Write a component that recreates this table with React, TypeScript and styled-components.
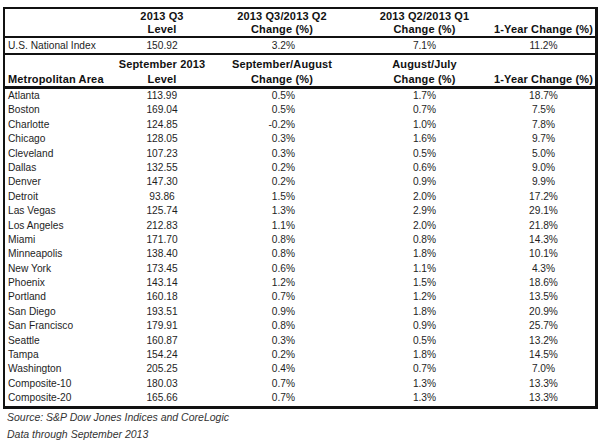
import React from "react";
import styled, { createGlobalStyle } from "styled-components";

const Global = createGlobalStyle`
  html, body { margin: 0; padding: 0; background: #fff; }
  body { font-family: "Liberation Sans", Arial, sans-serif; color: #1e1e1e; }
`;

const COLS = "112px 90px 150px 135px 1fr";

const Page = styled.div`
  padding: 7px 0 0 3px;
  width: 600px;
  box-sizing: border-box;
`;

const Frame = styled.div`
  width: 595px;
  box-sizing: border-box;
  border-style: solid;
  border-color: #111;
  border-width: 2px 3px 3px 2px;
`;

const HeadRow = styled.div<{ $h: number; $rule: number; $pt: number; $lh: number }>`
  display: grid;
  grid-template-columns: ${COLS};
  height: ${(p) => p.$h}px;
  box-sizing: content-box;
  border-bottom: ${(p) => p.$rule}px solid #111;
  padding-top: ${(p) => p.$pt}px;
  font-size: 11px;
  font-weight: bold;
  letter-spacing: 0.15px;
  line-height: ${(p) => p.$lh}px;
  color: #111;
`;

const HeadCell = styled.div<{ $align?: string }>`
  display: flex;
  flex-direction: column;
  justify-content: flex-end;
  align-items: ${(p) => p.$align || "center"};
  padding-left: ${(p) => (p.$align === "flex-start" ? "3px" : "0")};
  white-space: nowrap;
`;

const Row = styled.div<{ $h: number; $rule?: number }>`
  display: grid;
  grid-template-columns: ${COLS};
  height: ${(p) => p.$h}px;
  border-bottom: ${(p) => p.$rule || 0}px solid #111;
  font-size: 10.2px;
  line-height: ${(p) => p.$h}px;
  white-space: nowrap;
`;

const Name = styled.div`
  padding-left: 3px;
`;

const Num = styled.div<{ $right?: number }>`
  text-align: ${(p) => (p.$right != null ? "right" : "center")};
  padding-right: ${(p) => p.$right || 0}px;
`;

const Caption = styled.div`
  padding: 0 0 0 4px;
  font-size: 10.5px;
  font-style: italic;
  line-height: 17px;
  color: #333;
`;

const data: [string, string, string, string, string][] = [
  ["Atlanta", "113.99", "0.5%", "1.7%", "18.7%"],
  ["Boston", "169.04", "0.5%", "0.7%", "7.5%"],
  ["Charlotte", "124.85", "-0.2%", "1.0%", "7.8%"],
  ["Chicago", "128.05", "0.3%", "1.6%", "9.7%"],
  ["Cleveland", "107.23", "0.3%", "0.5%", "5.0%"],
  ["Dallas", "132.55", "0.2%", "0.6%", "9.0%"],
  ["Denver", "147.30", "0.2%", "0.9%", "9.9%"],
  ["Detroit", "93.86", "1.5%", "2.0%", "17.2%"],
  ["Las Vegas", "125.74", "1.3%", "2.9%", "29.1%"],
  ["Los Angeles", "212.83", "1.1%", "2.0%", "21.8%"],
  ["Miami", "171.70", "0.8%", "0.8%", "14.3%"],
  ["Minneapolis", "138.40", "0.8%", "1.8%", "10.1%"],
  ["New York", "173.45", "0.6%", "1.1%", "4.3%"],
  ["Phoenix", "143.14", "1.2%", "1.5%", "18.6%"],
  ["Portland", "160.18", "0.7%", "1.2%", "13.5%"],
  ["San Diego", "193.51", "0.9%", "1.8%", "20.9%"],
  ["San Francisco", "179.91", "0.8%", "0.9%", "25.7%"],
  ["Seattle", "160.87", "0.3%", "0.5%", "13.2%"],
  ["Tampa", "154.24", "0.2%", "1.8%", "14.5%"],
  ["Washington", "205.25", "0.4%", "0.7%", "7.0%"],
  ["Composite-10", "180.03", "0.7%", "1.3%", "13.3%"],
  ["Composite-20", "165.66", "0.7%", "1.3%", "13.3%"],
];

export default function App() {
  return (
    <Page>
      <Global />
      <Frame>
        <HeadRow $h={27} $rule={2} $pt={0} $lh={13}>
          <HeadCell $align="flex-start" />
          <HeadCell>
            <span>2013 Q3</span>
            <span>Level</span>
          </HeadCell>
          <HeadCell>
            <span>2013 Q3/2013 Q2</span>
            <span>Change (%)</span>
          </HeadCell>
          <HeadCell>
            <span>2013 Q2/2013 Q1</span>
            <span>Change (%)</span>
          </HeadCell>
          <HeadCell>
            <span>1-Year Change (%)</span>
          </HeadCell>
        </HeadRow>
        <Row $h={15} $rule={2}>
          <Name>U.S. National Index</Name>
          <Num>150.92</Num>
          <Num $right={62}>3.2%</Num>
          <Num>7.1%</Num>
          <Num>11.2%</Num>
        </Row>
        <HeadRow $h={29} $rule={3} $pt={2} $lh={15}>
          <HeadCell $align="flex-start">
            <span>Metropolitan Area</span>
          </HeadCell>
          <HeadCell>
            <span>September 2013</span>
            <span>Level</span>
          </HeadCell>
          <HeadCell>
            <span>September/August</span>
            <span>Change (%)</span>
          </HeadCell>
          <HeadCell>
            <span>August/July</span>
            <span>Change (%)</span>
          </HeadCell>
          <HeadCell>
            <span>1-Year Change (%)</span>
          </HeadCell>
        </HeadRow>
        {data.map((r) => (
          <Row key={r[0]} $h={14.4}>
            <Name>{r[0]}</Name>
            <Num>{r[1]}</Num>
            <Num $right={62}>{r[2]}</Num>
            <Num>{r[3]}</Num>
            <Num>{r[4]}</Num>
          </Row>
        ))}
      </Frame>
      <Caption>
        Source: S&amp;P Dow Jones Indices and CoreLogic
        <br />
        Data through September 2013
      </Caption>
    </Page>
  );
}
